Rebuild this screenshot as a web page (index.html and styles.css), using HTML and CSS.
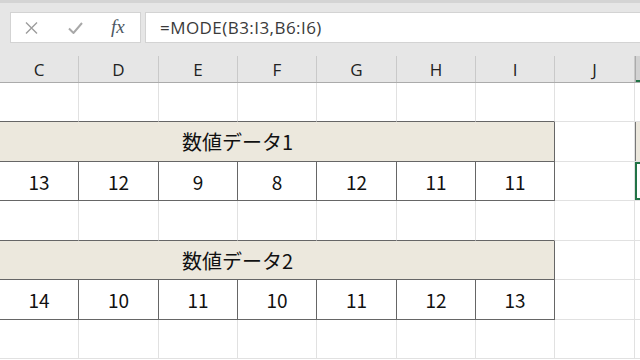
FILE: index.html
```html
<!DOCTYPE html>
<html lang="ja">
<head>
    <meta charset="UTF-8">
    <title>MODE関数 - 数値データ</title>
    <link rel="stylesheet" href="styles.css">
</head>
<body>
    <div class="top-strip"></div>

    <div class="ribbon">
        <div class="tools">
            <svg class="ico cancel" width="13" height="12" viewBox="0 0 13 12">
                <path d="M1 0.5 L12 11.5 M12 0.5 L1 11.5" stroke="#9d9d9d" stroke-width="1.4" fill="none"/>
            </svg>
            <svg class="ico enter" width="15" height="12" viewBox="0 0 15 12">
                <path d="M1 6.5 L5.5 11 L14 1" stroke="#a8a8a8" stroke-width="2" fill="none"/>
            </svg>
            <span class="fx">fx</span>
        </div>
        <div class="formula">=MODE(B3:I3,B6:I6)</div>
    </div>

    <!-- B と K は画面外なので見出し文字なし -->
    <div class="col-heads">
        <div class="ch"></div>
        <div class="ch">C</div>
        <div class="ch">D</div>
        <div class="ch">E</div>
        <div class="ch">F</div>
        <div class="ch">G</div>
        <div class="ch">H</div>
        <div class="ch">I</div>
        <div class="ch">J</div>
        <div class="ch active"></div>
    </div>

    <div class="sheet" id="sheet"></div>

    <script>
        // B..K の10列、行2..8
        const data1 = [13, 12, 9, 8, 12, 11, 11];
        const data2 = [14, 10, 11, 10, 11, 12, 13];

        function cell(cls, text) {
            return `<div class="c ${cls}">${text === undefined ? '' : text}</div>`;
        }

        function edgeRow() {
            let html = '';
            for (let i = 0; i < 8; i++) html += cell('above');
            html += cell('') + cell('');
            return html;
        }

        function titleRow(title, kFilled) {
            return cell('title', title) + cell('') + cell(kFilled ? 'k-title' : '');
        }

        function numRow(values, selected) {
            let html = cell('num');
            values.forEach(v => html += cell('num', v));
            html += cell('') + cell(selected ? 'sel' : '');
            return html;
        }

        function blankRow() {
            let html = '';
            for (let i = 0; i < 10; i++) html += cell('');
            return html;
        }

        document.getElementById('sheet').innerHTML =
            edgeRow() +
            titleRow('数値データ1', true) +
            numRow(data1, true) +
            edgeRow() +
            titleRow('数値データ2', false) +
            numRow(data2, false) +
            blankRow();
    </script>
</body>
</html>
```

FILE: styles.css
```css
body {
    margin: 0;
    width: 640px;
    height: 360px;
    overflow: hidden;
    background: #fff;
    font-family: "Open Sans", "Noto Sans CJK JP", sans-serif;
}
.top-strip {
    height: 3px;
    background: #d4d4d4;
}
.ribbon {
    display: flex;
    gap: 4px;
    background: #e6e6e6;
    padding: 9px 0 13px 10px;
}
.tools {
    width: 129px;
    height: 29px;
    background: #fff;
    border: 1px solid #d3d3d3;
    display: flex;
    align-items: center;
}
.ico.cancel {
    margin-left: 14px;
}
.ico.enter {
    margin-left: 30px;
}
.fx {
    margin-left: 28px;
    font-family: "Liberation Serif", serif;
    font-style: italic;
    font-size: 19px;
    color: #4d5762;
    line-height: 1;
    margin-top: -2px;
}
.formula {
    flex: 1;
    height: 29px;
    line-height: 29px;
    background: #fff;
    border: 1px solid #d3d3d3;
    border-right: none;
    padding-left: 14px;
    font-size: 17px;
    letter-spacing: 0.45px;
    color: #3a3a3a;
}
.col-heads,
.sheet {
    display: grid;
    grid-template-columns: 79px 79px 80px 79px 79px 80px 79px 79px 80px 80px;
    margin-left: -79px;
}
.col-heads {
    height: 26px;
    background: #e6e6e6;
    border-bottom: 1px solid #ababab;
}
.ch {
    border-right: 1px solid #c9c9c9;
    display: flex;
    align-items: center;
    justify-content: center;
    font-size: 17px;
    color: #222;
}
.ch.active {
    background: #d2d2d2;
    border-left: 1px solid #ababab;
    box-shadow: inset 0 -2px 0 #217346;
}
.sheet {
    grid-template-rows: 39px 40px 39px 40px 39px 40px 39px;
}
.c {
    border-right: 1px solid #e1e1e1;
    border-bottom: 1px solid #e1e1e1;
    display: flex;
    align-items: center;
    justify-content: center;
    font-family: "Noto Sans CJK JP", sans-serif;
    font-size: 19px;
    color: #111;
}
.c.above {
    border-bottom-color: #666;
}
.c.title {
    grid-column: span 8;
    background: #ece8dd;
    border-right-color: #666;
    border-bottom-color: #666;
    font-size: 20px;
}
.c.num {
    border-right-color: #666;
    border-bottom-color: #666;
}
.c.k-title {
    background: #ece8dd;
    box-shadow: inset 1px 0 0 #777;
}
.c.sel {
    box-shadow: inset 0 0 0 2px #217346;
}
```
